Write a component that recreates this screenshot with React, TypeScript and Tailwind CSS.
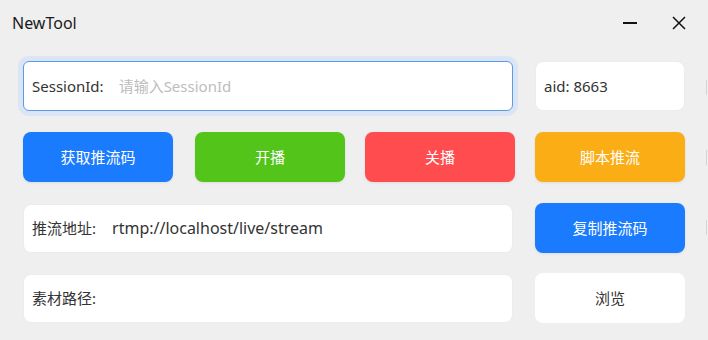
import React from "react";

const font = { fontFamily: '"Noto Sans", "Noto Sans CJK SC", sans-serif' };

function ActionButton({ label, color, className = "" }: { label: string; color: string; className?: string }) {
  return (
    <button
      className={`h-[50px] w-[150px] shrink-0 rounded-[8px] text-[15px] text-white shadow-[0_1px_3px_rgba(0,0,0,0.08)] ${color} ${className}`}
    >
      {label}
    </button>
  );
}

export default function App() {
  return (
    <div
      className="relative h-[340px] w-[708px] overflow-hidden bg-[#efefef] text-[#333]"
      style={font}
    >
      {/* title bar */}
      <div className="flex h-[46px] items-center pl-[12px] pr-[22px]">
        <span className="text-[16px] text-[#1a1a1a]">NewTool</span>
        <div className="ml-auto flex items-center gap-[34px]">
          <svg width="16" height="16" viewBox="0 0 16 16">
            <path d="M1 8h14" stroke="#111" strokeWidth="2" />
          </svg>
          <svg width="14" height="14" viewBox="0 0 14 14">
            <path d="M1 1l12 12M13 1L1 13" stroke="#111" strokeWidth="1.5" />
          </svg>
        </div>
      </div>

      <div className="flex flex-col gap-[21px] pl-[23px] pt-[15px]">
        {/* row 1 */}
        <div className="flex gap-[22px]">
          <div className="flex h-[50px] w-[490px] items-center rounded-[6px] border border-[#5b9be6] bg-white pl-[8px] text-[15px] shadow-[0_0_0_5px_#dae6f6]">
            <span className="text-[#333]">SessionId:</span>
            <span className="ml-[15px] text-[#bdbdbd]">请输入SessionId</span>
          </div>
          <div className="flex h-[50px] w-[150px] items-center rounded-[8px] border border-[#ececec] bg-white pl-[8px] text-[15px]">
            aid: 8663
          </div>
        </div>

        {/* row 2 */}
        <div className="flex">
          <ActionButton label="获取推流码" color="bg-[#1a7bff]" />
          <ActionButton label="开播" color="bg-[#52c41a]" className="ml-[22px]" />
          <ActionButton label="关播" color="bg-[#ff4d4f]" className="ml-[20px]" />
          <ActionButton label="脚本推流" color="bg-[#faad14]" className="ml-[20px]" />
        </div>

        {/* row 3 */}
        <div className="flex items-center gap-[22px]">
          <div className="flex h-[49px] w-[490px] items-center rounded-[8px] border border-[#ececec] bg-white pl-[8px] text-[15px]">
            <span>推流地址:</span>
            <span className="ml-[16px] text-[16px]">rtmp://localhost/live/stream</span>
          </div>
          <ActionButton label="复制推流码" color="bg-[#1a7bff]" />
        </div>

        {/* row 4 */}
        <div className="-mt-[1px] flex items-center gap-[22px]">
          <div className="flex h-[49px] w-[490px] items-center rounded-[8px] border border-[#ececec] bg-white pl-[8px] text-[15px]">
            <span>素材路径:</span>
          </div>
          <button className="h-[50px] w-[150px] rounded-[8px] bg-white text-[15px] text-[#333]">
            浏览
          </button>
        </div>
      </div>

      {/* faint cut-off marks at the right edge */}
      <div className="absolute right-[1px] top-0 flex h-full flex-col pt-[80px]">
        <div className="h-[15px] w-[1px] bg-[#d4d4d4]" />
        <div className="mt-[55px] h-[15px] w-[1px] bg-[#d4d4d4]" />
        <div className="mt-[55px] h-[15px] w-[1px] bg-[#d4d4d4]" />
      </div>
    </div>
  );
}
